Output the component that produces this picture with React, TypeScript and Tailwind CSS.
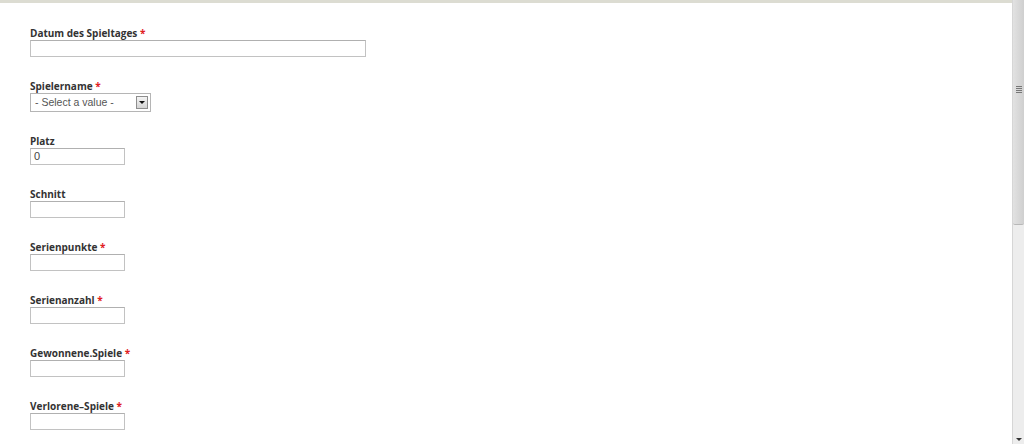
const fields = [
  { label: "Datum des Spieltages", required: true, width: "w-[336px]" },
  { label: "Spielername", required: true, select: true },
  { label: "Platz", required: false, width: "w-[95px]", value: "0" },
  { label: "Schnitt", required: false, width: "w-[95px]" },
  { label: "Serienpunkte", required: true, width: "w-[95px]" },
  { label: "Serienanzahl", required: true, width: "w-[95px]" },
  { label: "Gewonnene.Spiele", required: true, width: "w-[95px]" },
  { label: "Verlorene–Spiele", required: true, width: "w-[95px]" },
];

function SelectBox() {
  return (
    <div className="flex h-[19px] w-[121px] items-center justify-between border border-[#b5b5b5] bg-white pl-[4px] pr-[2px]">
      <span className="font-['Liberation_Sans',sans-serif] text-[10.5px] text-[#555]">- Select a value -</span>
      <div className="flex h-[13px] w-[12px] items-center justify-center border border-[#8e8e8e] bg-gradient-to-b from-[#f4f4f4] to-[#d4d4d4]">
        <div className="h-0 w-0 border-x-[3px] border-t-[3px] border-x-transparent border-t-[#111]" />
      </div>
    </div>
  );
}

function Scrollbar() {
  return (
    <div className="flex h-full w-[12px] flex-col border-l border-[#d6d6d6] bg-[#ededed]">
      <div className="flex h-[225px] flex-col items-center justify-center rounded-b-[2px] border-b border-[#b8b8b8] bg-gradient-to-r from-[#e2e2e2] to-[#cfcfcf] pb-[45px]">
        <div className="flex flex-col gap-[1px]">
          <div className="h-[1px] w-[6px] bg-[#777]" />
          <div className="h-[1px] w-[6px] bg-[#777]" />
          <div className="h-[1px] w-[6px] bg-[#777]" />
          <div className="h-[1px] w-[6px] bg-[#777]" />
        </div>
      </div>
      <div className="flex-1" />
      <div className="flex h-[10px] items-center justify-center">
        <div className="h-0 w-0 border-x-[3px] border-t-[3px] border-x-transparent border-t-[#333]" />
      </div>
    </div>
  );
}

export default function App() {
  return (
    <div className="flex h-[444px] w-[1024px] overflow-hidden bg-white">
      <div className="flex flex-1 flex-col">
        <div className="h-[3px] bg-[#dcdcd2]" />
        <div className="flex flex-col gap-[23px] pl-[30px] pt-[24px]">
          {fields.map((f) => (
            <div key={f.label} className="flex flex-col">
              <label className="h-[13px] font-['Open_Sans',sans-serif] text-[10px] font-bold leading-[13px] text-[#333]">
                {f.label}
                {f.required && <span className="text-[#e0201f]"> *</span>}
              </label>
              {f.select ? (
                <SelectBox />
              ) : (
                <div
                  className={`${f.width} flex h-[17px] items-center border border-[#c2c2c2] border-t-[#b0b0b0] bg-white px-[3px] font-['Liberation_Sans',sans-serif] text-[11px] text-[#444]`}
                >
                  {f.value}
                </div>
              )}
            </div>
          ))}
        </div>
      </div>
      <Scrollbar />
    </div>
  );
}
